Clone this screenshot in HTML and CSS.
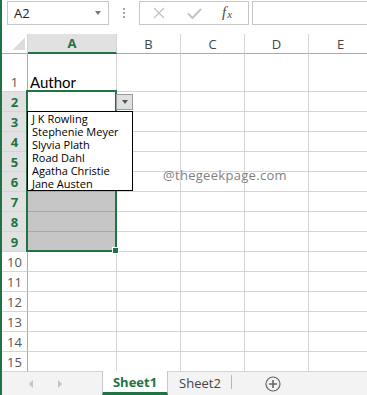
FILE: index.html
```html
<!DOCTYPE html>
<html>

<head>
	<title>Excel - Data validation list</title>

	<link rel="stylesheet" href="styles.css">
</head>

<body>
	<div class="app">
		<div class="toolbar">
			<div class="namebox">
				<span class="ref">A2</span>
				<span class="caret"></span>
			</div>
			<div class="dots">
				<svg width="4" height="12" viewBox="0 0 4 12"><rect x="1" y="0" width="2" height="2" fill="#a6a6a6"/><rect x="1" y="4" width="2" height="2" fill="#a6a6a6"/><rect x="1" y="8" width="2" height="2" fill="#a6a6a6"/></svg>
			</div>
			<div class="fbtns">
				<span class="fbtn">
					<svg width="12" height="12" viewBox="0 0 12 12"><path d="M1 1 L11 11 M11 1 L1 11" stroke="#c3c3c3" stroke-width="1.4" fill="none"/></svg>
				</span>
				<span class="fbtn">
					<svg width="15" height="11" viewBox="0 0 15 11"><path d="M1 5.5 L5.5 10 L14 1" stroke="#c3c3c3" stroke-width="2" fill="none"/></svg>
				</span>
				<span class="fbtn fx"><i>f</i><i class="sub">x</i></span>
			</div>
			<div class="finput"></div>
		</div>

		<div class="sheet">
			<div class="grid" id="grid"></div>

			<div class="selection"></div>
			<div class="handle"></div>
			<div class="dd-btn"><span class="tri"></span></div>
			<ul class="dd-list">
				<li>J K Rowling</li>
				<li>Stephenie Meyer</li>
				<li>Slyvia Plath</li>
				<li>Road Dahl</li>
				<li>Agatha Christie</li>
				<li>Jane Austen</li>
			</ul>
			<div class="watermark">@thegeekpage.com</div>
		</div>

		<div class="tabs">
			<div class="nav">
				<span class="arr left"></span>
				<span class="arr right"></span>
			</div>
			<div class="tab active">Sheet1</div>
			<div class="tab">Sheet2</div>
			<div class="add">
				<svg width="16" height="16" viewBox="0 0 16 16"><circle cx="8" cy="8" r="7" stroke="#666" stroke-width="1.2" fill="none"/><path d="M8 4 V12 M4 8 H12" stroke="#666" stroke-width="1.6"/></svg>
			</div>
		</div>
	</div>

	<script>
		var cols = ["A","B","C","D","E"];
		var str = '<div class="corner"><span class="tri-c"></span></div>';
		for(var c=0;c<cols.length;c++){
			str += `<div class="ch ${c===0 ? 'sel' : ''}">${cols[c]}</div>`;
		}
		for(var r=1;r<=15;r++){
			var sel = (r>=2 && r<=9);
			str += `<div class="rh ${sel ? 'sel' : ''}">${r}</div>`;
			for(var c=0;c<cols.length;c++){
				var cls = "c";
				var txt = "";
				if(c===0 && r>=3 && r<=9) cls += " fill";
				if(c===0 && r===1) txt = "Author";
				str += `<div class="${cls}">${txt}</div>`;
			}
		}
		document.querySelector("#grid").innerHTML = str;
	</script>
</body>

</html>
```

FILE: styles.css
```css
body{
	margin: 0;
	font-family: "Open Sans", sans-serif;
	color: #444;
}

.app{
	width: 367px;
	height: 395px;
	box-sizing: border-box;
	border-left: 2px solid #217346;
	overflow: hidden;
	background: #fff;
}

/* formula bar */
.toolbar{
	display: flex;
	height: 34px;
	padding-top: 1px;
	box-sizing: border-box;
}
.namebox{
	margin-left: 5px;
	width: 102px;
	height: 24px;
	box-sizing: border-box;
	border: 1px solid #c6c6c6;
	display: flex;
	align-items: center;
	justify-content: space-between;
	padding: 0 7px 0 6px;
}
.ref{
	font-size: 13px;
	color: #222;
}
.caret{
	width: 0;
	height: 0;
	border-left: 3.5px solid transparent;
	border-right: 3.5px solid transparent;
	border-top: 4px solid #777;
	margin-top: -1px;
}
.dots{
	width: 30px;
	height: 24px;
	display: flex;
	align-items: center;
	justify-content: center;
	padding-top: 2px;
	box-sizing: border-box;
}
.fbtns{
	width: 110px;
	height: 24px;
	box-sizing: border-box;
	border: 1px solid #c6c6c6;
	display: flex;
	align-items: center;
	padding-left: 13px;
	gap: 0;
}
.fbtn{
	display: flex;
	align-items: center;
	justify-content: center;
	height: 22px;
}
.fbtn:nth-child(1){ width: 12px; }
.fbtn:nth-child(2){ width: 15px; margin-left: 22px; }
.fx{
	margin-left: 20px;
	font-family: "Liberation Serif", serif;
	font-size: 15px;
	color: #4a4a4a;
	padding-bottom: 2px;
}
.fx .sub{
	font-size: 11px;
	margin-left: 1px;
	margin-top: 3px;
}
.finput{
	flex: 1;
	margin-left: 3px;
	height: 24px;
	box-sizing: border-box;
	border: 1px solid #c6c6c6;
	border-right: none;
}

/* sheet */
.sheet{
	position: relative;
	height: 338px;
	overflow: hidden;
}
.grid{
	display: grid;
	grid-template-columns: 26px 89px 64px 64px 64px 64px;
	grid-template-rows: 20px 38px repeat(14, 20px);
}
.grid > div{
	box-sizing: border-box;
	border-right: 1px solid #d4d4d4;
	border-bottom: 1px solid #d4d4d4;
}
.corner{
	position: relative;
	border-bottom-color: #ababab !important;
	border-right-color: #d4d4d4;
}
.tri-c{
	position: absolute;
	left: 11px;
	top: 4px;
	width: 12px;
	height: 12px;
	background: linear-gradient(to bottom right, transparent 50%, #dcdcdc 50%);
}
.ch{
	display: flex;
	align-items: center;
	justify-content: center;
	font-size: 13px;
	line-height: 18px;
	border-bottom-color: #ababab !important;
}
.ch.sel{
	background: #e1e1e1;
	color: #217346;
	font-weight: bold;
	border-bottom: 2px solid #217346 !important;
}
.rh{
	display: flex;
	align-items: flex-end;
	justify-content: center;
	font-size: 13px;
	line-height: 18px;
	color: #555;
	border-right-color: #ababab !important;
}
.rh.sel{
	background: #e1e1e1;
	color: #217346;
	font-weight: bold;
}
.c{
	display: flex;
	align-items: flex-end;
	padding-left: 2px;
	font-family: Lato, "Open Sans", sans-serif;
	font-size: 15px;
	line-height: 18px;
	color: #000;
}
.c.fill{
	background: #c6c6c6;
	border-bottom-color: #a9a9a9 !important;
}

/* overlays */
.selection{
	position: absolute;
	left: 24px;
	top: 56px;
	width: 91px;
	height: 162px;
	box-sizing: border-box;
	border: 2px solid #217346;
}
.handle{
	position: absolute;
	left: 110px;
	top: 213px;
	width: 5px;
	height: 5px;
	background: #217346;
	border: 1px solid #fff;
}
.dd-btn{
	position: absolute;
	left: 114px;
	top: 60px;
	width: 17px;
	height: 16px;
	box-sizing: border-box;
	border: 1px solid #9a9a9a;
	background: #e0e0e0;
	display: flex;
	align-items: center;
	justify-content: center;
}
.tri{
	width: 0;
	height: 0;
	border-left: 3.5px solid transparent;
	border-right: 3.5px solid transparent;
	border-top: 4px solid #555;
}
.dd-list{
	position: absolute;
	left: 25px;
	top: 77px;
	width: 106px;
	height: 80px;
	box-sizing: border-box;
	margin: 0;
	padding: 0 0 0 4px;
	list-style: none;
	border: 1px solid #000;
	background: #fff;
	font-size: 11px;
	line-height: 13px;
	color: #000;
}
.watermark{
	position: absolute;
	left: 161px;
	top: 132px;
	font-size: 13px;
	letter-spacing: 0.3px;
	color: #7f7f7f;
}

/* sheet tabs */
.tabs{
	display: flex;
	height: 24px;
	margin-top: -1px;
	box-sizing: border-box;
	background: #f3f3f3;
	border-top: 1px solid #c6c6c6;
}
.nav{
	width: 100px;
	display: flex;
	align-items: center;
	padding-left: 27px;
	gap: 25px;
	box-sizing: border-box;
}
.arr{
	width: 0;
	height: 0;
	border-top: 4px solid transparent;
	border-bottom: 4px solid transparent;
}
.arr.left{ border-right: 4px solid #c3c3c3; }
.arr.right{ border-left: 4px solid #c3c3c3; }
.tab{
	width: 64px;
	height: 22px;
	display: flex;
	align-items: center;
	justify-content: center;
	font-size: 13px;
	color: #444;
	position: relative;
}
.tab::after{
	content: "";
	position: absolute;
	right: 0;
	top: 3px;
	height: 14px;
	border-right: 1px solid #b8b8b8;
}
.tab.active{
	margin-top: -1px;
	height: 24px;
	width: 66px;
	box-sizing: border-box;
	background: #fff;
	border-left: 1px solid #c6c6c6;
	border-right: 1px solid #c6c6c6;
	border-bottom: 3px solid #217346;
	color: #217346;
	font-weight: bold;
	padding-top: 1px;
}
.tab.active::after{
	display: none;
}
.add{
	margin-left: 33px;
	display: flex;
	align-items: center;
}
```
